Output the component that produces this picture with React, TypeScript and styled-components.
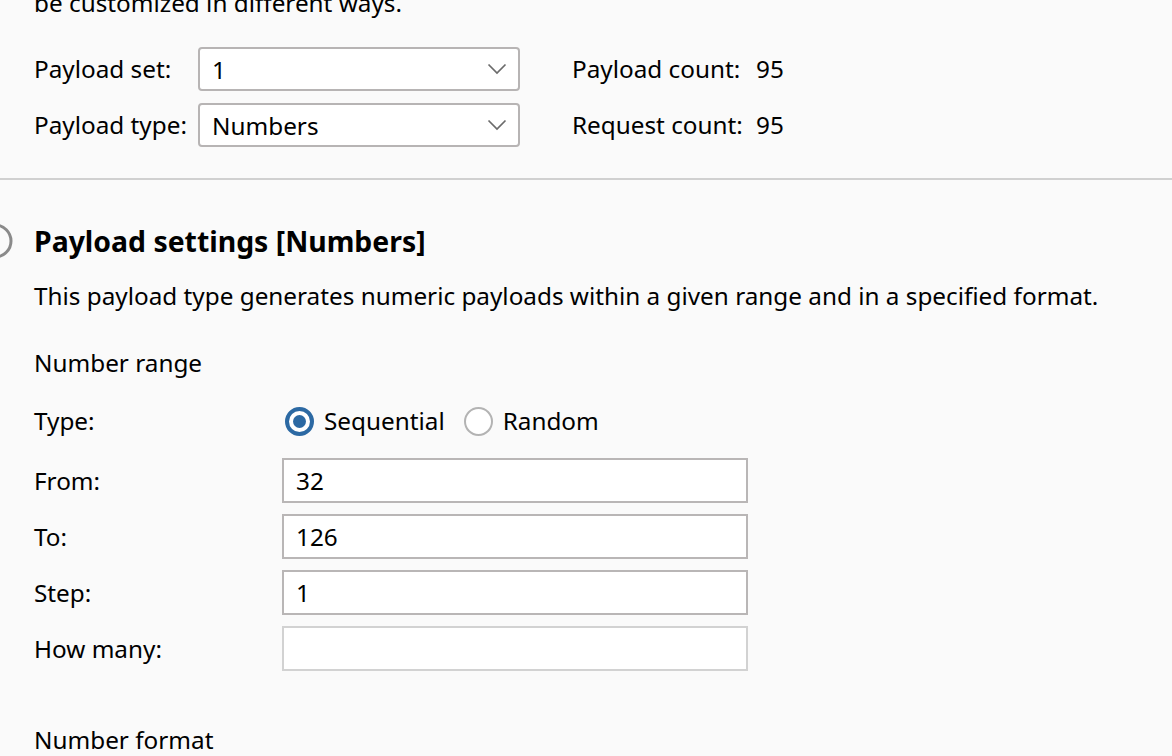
import React from "react";
import styled, { createGlobalStyle } from "styled-components";

const Global = createGlobalStyle`
  html, body { margin: 0; padding: 0; background: #fafafa; }
  body {
    font-family: "Noto Sans", "Open Sans", sans-serif;
    font-size: 24.3px;
    color: #000;
    overflow: hidden;
  }
  * { box-sizing: border-box; }
`;

const Page = styled.div`
  width: 1172px;
  height: 756px;
  overflow: hidden;
  background: #fafafa;
`;

const TopSection = styled.section`
  padding: 0 0 31px 34px;
  border-bottom: 2px solid #d0d0d0;
`;

const Intro = styled.p`
  margin: -13px 0 28px;
  line-height: 32px;
`;

const TopGrid = styled.div`
  display: flex;
  align-items: flex-start;
`;

const FieldGrid = styled.div`
  display: grid;
  grid-template-columns: 164px 322px;
  grid-auto-rows: 44px;
  row-gap: 12px;
  align-items: center;
`;

const CountGrid = styled.div`
  display: grid;
  grid-template-columns: 184px auto;
  grid-auto-rows: 44px;
  row-gap: 12px;
  align-items: center;
  margin-left: 52px;
`;

const Label = styled.span`
  line-height: 32px;
  white-space: nowrap;
`;

const Select = styled.div`
  height: 44px;
  border: 2px solid #b7b4b4;
  border-radius: 4px;
  background: #fff;
  display: flex;
  align-items: center;
  justify-content: space-between;
  padding: 0 11px 0 12px;
`;

const Chevron = () => (
  <svg width="20" height="12" viewBox="0 0 20 12" fill="none">
    <path d="M1.5 1.5 L10 10 L18.5 1.5" stroke="#6b6b6b" strokeWidth="1.7" />
  </svg>
);

const SettingsSection = styled.section`
  padding: 43px 0 0 34px;
  display: flex;
  flex-direction: column;
`;

const HeadingRow = styled.div`
  display: flex;
  align-items: center;
  gap: 20px;
  margin-left: -58px;
  height: 36px;
`;

const Heading = styled.h2`
  margin: 0;
  font-size: 28.4px;
  font-weight: 700;
  line-height: 36px;
`;

const Description = styled.p`
  margin: 21px 0 0;
  line-height: 32px;
`;

const SubTitle = styled.div<{ $gap: number }>`
  margin-top: ${(p) => p.$gap}px;
  line-height: 32px;
`;

const FormRow = styled.div<{ $gap: number; $h: number }>`
  display: grid;
  grid-template-columns: 248px 466px;
  align-items: center;
  height: ${(p) => p.$h}px;
  margin-top: ${(p) => p.$gap}px;
`;

const TextInput = styled.div<{ $disabled?: boolean }>`
  height: 45px;
  border: 2px solid ${(p) => (p.$disabled ? "#d2d2d2" : "#b9b6b6")};
  background: #fff;
  display: flex;
  align-items: center;
  padding: 0 12px;
  line-height: 32px;
`;

const RadioGroup = styled.div`
  display: flex;
  align-items: center;
  padding-left: 3px;
`;

const RadioItem = styled.label`
  display: flex;
  align-items: center;
  gap: 10px;
  margin-right: 19px;
  line-height: 32px;
`;

const RadioCircle = styled.span<{ $checked?: boolean }>`
  width: 29px;
  height: 29px;
  border-radius: 50%;
  background: #fff;
  border: ${(p) => (p.$checked ? "4px solid #2c69a3" : "2px solid #b3b3b3")};
  display: flex;
  align-items: center;
  justify-content: center;
  &::after {
    content: "";
    display: ${(p) => (p.$checked ? "block" : "none")};
    width: 13px;
    height: 13px;
    border-radius: 50%;
    background: #2c69a3;
  }
`;

const HelpIcon = () => (
  <svg width="38" height="38" viewBox="0 0 38 38" fill="none">
    <circle cx="19" cy="19" r="16" stroke="#8a8a8a" strokeWidth="3" />
  </svg>
);

export default function App() {
  return (
    <Page>
      <Global />
      <TopSection>
        <Intro>be customized in different ways.</Intro>
        <TopGrid>
          <FieldGrid>
            <Label>Payload set:</Label>
            <Select>
              <span>1</span>
              <Chevron />
            </Select>
            <Label>Payload type:</Label>
            <Select>
              <span>Numbers</span>
              <Chevron />
            </Select>
          </FieldGrid>
          <CountGrid>
            <Label>Payload count:</Label>
            <Label>95</Label>
            <Label>Request count:</Label>
            <Label>95</Label>
          </CountGrid>
        </TopGrid>
      </TopSection>
      <SettingsSection>
        <HeadingRow>
          <HelpIcon />
          <Heading>Payload settings [Numbers]</Heading>
        </HeadingRow>
        <Description>
          This payload type generates numeric payloads within a given range and in a specified format.
        </Description>
        <SubTitle $gap={35}>Number range</SubTitle>
        <FormRow $gap={20} $h={44}>
          <Label>Type:</Label>
          <RadioGroup>
            <RadioItem>
              <RadioCircle $checked />
              Sequential
            </RadioItem>
            <RadioItem>
              <RadioCircle />
              Random
            </RadioItem>
          </RadioGroup>
        </FormRow>
        <FormRow $gap={15} $h={45}>
          <Label>From:</Label>
          <TextInput>32</TextInput>
        </FormRow>
        <FormRow $gap={11} $h={45}>
          <Label>To:</Label>
          <TextInput>126</TextInput>
        </FormRow>
        <FormRow $gap={11} $h={45}>
          <Label>Step:</Label>
          <TextInput>1</TextInput>
        </FormRow>
        <FormRow $gap={11} $h={45}>
          <Label>How many:</Label>
          <TextInput $disabled />
        </FormRow>
        <SubTitle $gap={53}>Number format</SubTitle>
      </SettingsSection>
    </Page>
  );
}
